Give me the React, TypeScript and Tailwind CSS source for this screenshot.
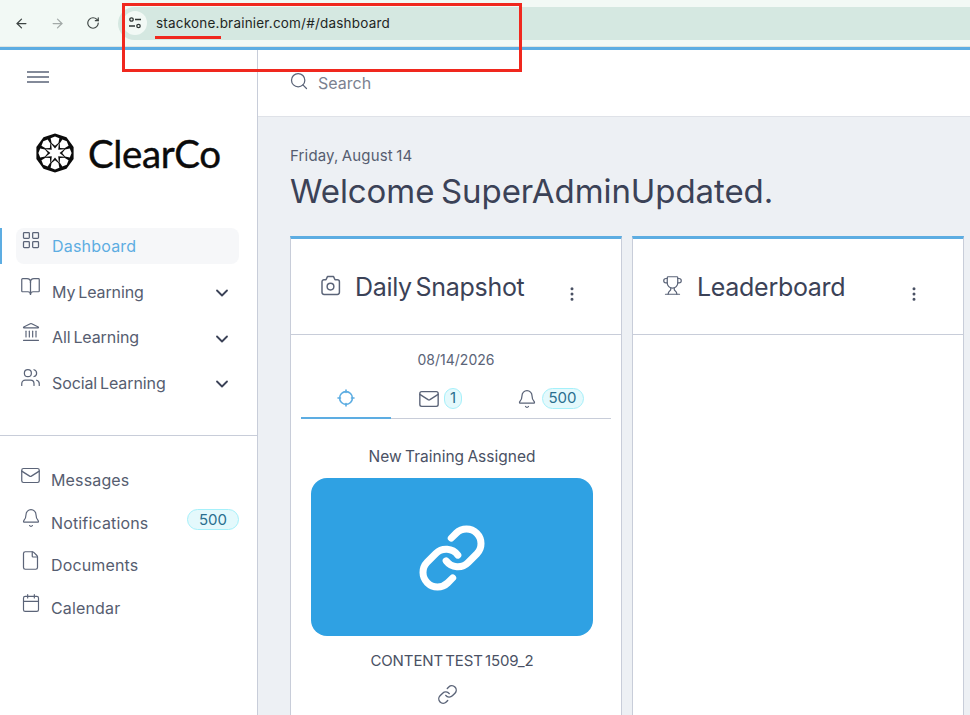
import { ArrowLeft, ArrowRight, RotateCw, Search, LayoutGrid, BookOpen, Landmark, Users, ChevronDown, Mail, Bell, File, Calendar, Trophy, MoreVertical, Link } from "lucide-react";

const learningItems = [
  { label: "My Learning", icon: BookOpen, size: "h-[21px] w-[21px]" },
  { label: "All Learning", icon: Landmark, size: "h-[20px] w-[20px]" },
  { label: "Social Learning", icon: Users, size: "h-[21px] w-[21px]" },
];

const bottomItems = [
  { label: "Messages", icon: Mail, size: "h-[21px] w-[21px]" },
  { label: "Notifications", icon: Bell, size: "h-[20px] w-[20px]", badge: "500" },
  { label: "Documents", icon: File, size: "h-[21px] w-[21px]" },
  { label: "Calendar", icon: Calendar, size: "h-[20px] w-[20px]" },
];

function Logo() {
  const petals = Array.from({ length: 8 }, (_, i) => i * 45);
  const star = Array.from({ length: 16 }, (_, i) => {
    const r = i % 2 === 0 ? 4.6 : 10;
    const a = (i * 22.5 * Math.PI) / 180;
    return `${20 + r * Math.sin(a)},${20 - r * Math.cos(a)}`;
  }).join(" ");
  return (
    <svg viewBox="0 0 40 40" className="h-[40px] w-[40px] shrink-0">
      <polygon points="20,0.5 31.5,4.2 38.6,14 38.6,26 31.5,35.8 20,39.5 8.5,35.8 1.4,26 1.4,14 8.5,4.2" fill="#0b0b0b" />
      {petals.map((a) => (
        <polygon key={a} points="20,3.4 24.4,5.2 23.4,10 20,12.8 16.6,10 15.6,5.2" fill="#fff" transform={`rotate(${a} 20 20)`} />
      ))}
      <polygon points={star} fill="#fff" />
    </svg>
  );
}

function CameraIcon({ className }: { className?: string }) {
  return (
    <svg viewBox="0 0 20 20" className={className} fill="none" stroke="currentColor" strokeWidth="1.4" strokeLinejoin="round">
      <path d="M3.5 4.500h2.200l1.400-3h5.800l1.400 3h2.200a2 2 0 0 1 2 2v10a2 2 0 0 1-2 2h-12.600a2 2 0 0 1-2-2v-10a2 2 0 0 1 2-2z" />
      <circle cx="10" cy="11" r="3.200" />
    </svg>
  );
}

function TrophyIcon({ className }: { className?: string }) {
  return <Trophy className={className} strokeWidth={1.4} />;
}

function TargetIcon({ className }: { className?: string }) {
  return (
    <svg viewBox="0 0 18 18" className={className} fill="none" stroke="currentColor" strokeWidth="1.6" strokeLinecap="round">
      <circle cx="9" cy="9" r="6.400" />
      <path d="M9 1v2.500M9 14.500V17M1 9h2.500M14.500 9H17" />
    </svg>
  );
}

function Badge({ children, className }: { children: string; className: string }) {
  return (
    <span className={`flex h-[21px] items-center justify-center rounded-full border border-[#a5f0fa] bg-[#e4f9fc] text-[15px] text-[#2a6f8f] ${className}`}>
      {children}
    </span>
  );
}

function Card({ title, icon: Icon, children }: { title: string; icon: React.ComponentType<{ className?: string }>; children?: React.ReactNode }) {
  return (
    <div className="flex h-[480px] w-[332px] shrink-0 flex-col border-x border-[#c8cdd9] border-t-[3px] border-t-[#5dade2] bg-white">
      <div className="flex h-[96px] items-center border-b border-[#c8cdd9] pl-[29px] pr-[40px]">
        <Icon className="mb-[2px] h-[21px] w-[21px] text-[#5b6478]" />
        <span className="ml-[14px] mt-[3px] text-[25px] tracking-[-0.3px] text-[#3b4257] [word-spacing:-3px]">{title}</span>
        <MoreVertical className="ml-auto mt-[14px] h-[18px] w-[18px] text-[#4a5164]" strokeWidth={2} />
      </div>
      {children}
    </div>
  );
}

export default function App() {
  return (
    <div className="flex h-[715px] w-[970px] flex-col overflow-hidden bg-white font-['Inter',sans-serif]">
      {/* browser chrome */}
      <div className="flex h-[47px] shrink-0 items-center border-b border-[#dfe5e1] bg-[#f2f9f5] pl-[14px]">
        <ArrowLeft className="h-[15px] w-[15px] text-[#3d4543]" strokeWidth={2} />
        <ArrowRight className="ml-[21px] h-[15px] w-[15px] text-[#a3aaa8]" strokeWidth={2} />
        <RotateCw className="ml-[21px] h-[14px] w-[14px] text-[#3d4543]" strokeWidth={2} />
        <div className="ml-[18px] flex h-[33px] flex-1 items-center rounded-l-full bg-[#d5e8e1] pl-[5px]">
          <div className="flex h-[24px] w-[24px] items-center justify-center rounded-full bg-[#f2f9f5]">
            <svg viewBox="0 0 14 14" className="h-[14px] w-[14px]" fill="none" stroke="#2f3634" strokeWidth="1.3">
              <circle cx="3.5" cy="3.5" r="1.7" />
              <path d="M7 3.5h6M1 10h6" />
              <circle cx="10.5" cy="10" r="1.7" />
            </svg>
          </div>
          <span className="ml-[9px] text-[13.5px] tracking-[0.2px] text-[#1f2624]">stackone.brainier.com/#/dashboard</span>
        </div>
      </div>
      <div className="h-[3px] shrink-0 bg-[#5dade2]" />

      <div className="flex min-h-0 flex-1">
        {/* sidebar */}
        <aside className="flex w-[258px] shrink-0 flex-col border-r border-[#c8cdd9] bg-white">
          <div className="flex h-[54px] items-center pl-[27px]">
            <svg viewBox="0 0 22 12" className="h-[12px] w-[22px]" fill="none" stroke="#5b6478" strokeWidth="1.4">
              <path d="M0 1h22M0 6h22M0 11h22" />
            </svg>
          </div>
          <div className="mt-[29px] flex items-center pl-[35px]">
            <Logo />
            <span className="ml-[13px] font-['Lato',sans-serif] text-[38.5px] leading-[40px] tracking-[-0.4px] text-[#0b0b0b] [-webkit-text-stroke:0.4px_#0b0b0b]">ClearCo</span>
          </div>

          <nav className="mt-[55px] flex flex-col">
            <div className="flex h-[36px] border-l-2 border-[#5dade2] pl-[14px] pr-[18px]">
              <div className="flex flex-1 items-center rounded-lg bg-[#f6f7f9] pl-[5px]">
                <LayoutGrid className="mb-[12px] h-[20px] w-[20px] text-[#5b6478]" strokeWidth={1.5} />
                <span className="ml-[11px] text-[16px] tracking-[0.2px] text-[#5dade2]">Dashboard</span>
              </div>
            </div>
            {learningItems.map((item) => (
              <div key={item.label} className="mt-[9.5px] flex h-[36px] items-center pl-[20px] pr-[25px]">
                <div className="flex w-[21px] justify-center">
                  <item.icon className={`mb-[10px] text-[#5b6478] ${item.size}`} strokeWidth={1.4} />
                </div>
                <span className="ml-[11px] text-[16px] tracking-[-0.1px] text-[#565d70] [word-spacing:-1.500px]">{item.label}</span>
                <ChevronDown className="ml-auto mt-[3px] h-[20px] w-[20px] text-[#3b4257]" strokeWidth={2.2} />
              </div>
            ))}
          </nav>

          <div className="mt-[34px] border-t border-[#c8cdd9] pt-[27px]">
            {bottomItems.map((item) => (
              <div key={item.label} className="mb-[7px] flex h-[35.5px] items-center pl-[20px] pr-[18px]">
                <div className="flex w-[21px] justify-center">
                  <item.icon className={`mb-[10px] text-[#5b6478] ${item.size}`} strokeWidth={1.4} />
                </div>
                <span className="ml-[10px] text-[16px] tracking-[0.15px] text-[#565d70]">{item.label}</span>
                {item.badge && <Badge className="mb-[6px] ml-auto w-[52px]">{item.badge}</Badge>}
              </div>
            ))}
          </div>
        </aside>

        <div className="flex min-w-0 flex-1 flex-col">
          {/* search bar */}
          <div className="flex h-[67px] shrink-0 items-center border-b border-[#dfe2e8] bg-white pl-[31px]">
            <Search className="mb-[5px] h-[20px] w-[20px] text-[#5b6478]" strokeWidth={1.5} />
            <span className="ml-[9px] text-[16px] text-[#7b8190]">Search</span>
          </div>

          <main className="flex-1 bg-[#edf0f4] pl-[32px] pt-[29px]">
            <p className="text-[15px] leading-[20px] tracking-[0.15px] text-[#565d70] [word-spacing:-1px]">Friday, August 14</p>
            <h1 className="mt-[6px] text-[33px] leading-[38px] tracking-[-0.08px] text-[#3b4257] [word-spacing:-2.500px]">Welcome SuperAdminUpdated.</h1>
            <div className="mt-[26px] flex gap-[10px]">
              <Card title="Daily Snapshot" icon={CameraIcon}>
                <div className="flex flex-col pt-[16px]">
                  <span className="text-center text-[14px] leading-[18px] text-[#5b6478]">08/14/2026</span>
                  <div className="ml-[10px] mt-[10px] flex h-[40px] w-[310px] border-b border-[#c8cdd9]">
                    <div className="-mb-px flex w-[90px] items-center justify-center border-b-2 border-[#5dade2]">
                      <TargetIcon className="h-[18px] w-[18px] text-[#5dade2]" />
                    </div>
                    <div className="flex w-[98px] items-center justify-center gap-[4px]">
                      <Mail className="h-[22px] w-[22px] text-[#5b6478]" strokeWidth={1.5} />
                      <Badge className="w-[18px]">1</Badge>
                    </div>
                    <div className="flex w-[122px] items-center justify-center gap-[5px]">
                      <Bell className="h-[20px] w-[20px] text-[#5b6478]" strokeWidth={1.5} />
                      <Badge className="w-[42px]">500</Badge>
                    </div>
                  </div>
                  <div className="ml-[20px] flex w-[282px] flex-col items-center">
                    <span className="mt-[28px] text-[15.5px] leading-[20px] text-[#4a5164] [word-spacing:-1px]">New Training Assigned</span>
                    <div className="mt-[11px] flex h-[158px] w-[282px] items-center justify-center rounded-[16px] bg-[#2fa1e3]">
                      <Link className="mt-[2px] h-[70px] w-[70px] text-white" strokeWidth={2.4} />
                    </div>
                    <span className="mt-[15px] text-[15px] leading-[20px] tracking-[-0.1px] text-[#4a5164] [word-spacing:-2px]">CONTENT TEST 1509_2</span>
                    <Link className="mr-[10px] mt-[13px] h-[21px] w-[21px] text-[#5b6478]" strokeWidth={1.6} />
                  </div>
                </div>
              </Card>
              <Card title="Leaderboard" icon={TrophyIcon} />
            </div>
          </main>
        </div>
      </div>

      {/* annotation drawn over the screenshot */}
      <div className="pointer-events-none absolute left-[122px] top-[3px] h-[69px] w-[400px] border-[3px] border-[#f0281e]" />
      <div className="pointer-events-none absolute left-[155px] top-[36px] h-[3px] w-[66px] bg-[#f0281e]" />
    </div>
  );
}
